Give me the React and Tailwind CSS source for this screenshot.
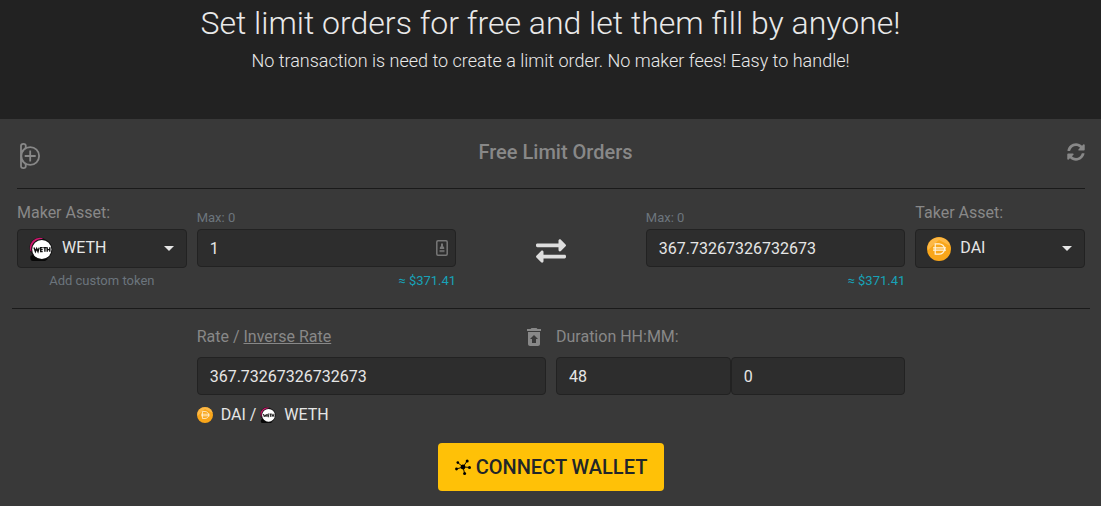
import React, { useState } from 'react';
import { FaExchangeAlt, FaSyncAlt } from 'react-icons/fa';
import { MdRestoreFromTrash } from 'react-icons/md';

const tokens = ['WETH', 'DAI'];

const inputClass =
  'block w-full h-[38px] px-3 rounded border border-[#222] bg-[#2d2d2d] text-base text-[#e6e6e6] outline-none focus:border-[#666]';

const WethIcon = ({ className }) => (
  <svg viewBox="0 0 24 24" className={className} aria-hidden="true">
    <path d="M1.5 19 L5 17 L19 22 L16 24 H4 Q0.5 24 1.5 19Z" fill="#080808" />
    <circle cx="10.5" cy="10.5" r="10" fill="#1c0c15" />
    <path d="M1.5 14 A10 10 0 0 1 14 1.2 L9 5 L4 15Z" fill="#d0186f" />
    <circle cx="12.8" cy="12.5" r="10.6" fill="#111" />
    <circle cx="12.8" cy="12.5" r="9.6" fill="#fff" />
    <path
      d="M5 10.6 L6.4 14.6 L7.7 11.6 L9 14.6 L10.2 10.6 M13.7 10.6 H11.7 V14.6 H13.7 M11.7 12.6 H13.7 M14.3 10.6 H17.5 M15.9 10.6 V14.8 M18.2 10.2 V14.8 M20.8 10.2 V14.8 M18.2 12.6 H20.8"
      fill="none"
      stroke="#111"
      strokeWidth="1.4"
    />
  </svg>
);

const DaiIcon = ({ className }) => (
  <svg viewBox="0 0 24 24" className={className} aria-hidden="true">
    <circle cx="12" cy="12" r="12" fill="#f9a61a" />
    <path d="M0.5 9 A12 12 0 0 1 23.5 9 L12 3 L1 13Z" fill="#ffc15a" opacity="0.7" />
    <path
      d="M8.2 6.8 H12 C14.8 6.8 17.6 8.8 17.6 12 C17.6 15.2 14.8 17.2 12 17.2 H8.2 Z M6 10.8 H19 M6 13.2 H19"
      fill="none"
      stroke="#fff4dc"
      strokeWidth="1.2"
    />
  </svg>
);

const TokenIcon = ({ token, className }) =>
  token === 'WETH' ? <WethIcon className={className} /> : <DaiIcon className={className} />;

const AddPanelIcon = () => (
  <svg viewBox="0 0 20 26" className="w-5 h-[26px]" fill="none" stroke="currentColor" strokeWidth="1.8" aria-hidden="true">
    <circle cx="10.2" cy="13" r="8.9" />
    <path d="M10.2 7.5 V18.5 M4.7 13 H15.7" />
    <path d="M1 23 V3 C1 0.2 5.8 0.2 5.8 3 L5.6 5.2 M1 13 V23 C1 25.8 5.8 25.8 5.8 23 L5.6 20.8" strokeWidth="1.8" />
    <path d="M1 9 L5.6 4.8 M1 17 L5.6 21.2" strokeWidth="1.2" />
  </svg>
);

const ContactIcon = ({ className }) => (
  <svg viewBox="0 0 12 16" className={className} aria-hidden="true">
    <rect x="0.8" y="0.8" width="10.4" height="14.4" rx="1.2" fill="none" stroke="#777" strokeWidth="1.5" />
    <path d="M5 3.5 H7 V6 L8.2 7.5 V9 H3.8 V7.5 L5 6Z" fill="#777" />
    <path d="M3.5 10 H8.5 V12.2 H3.5Z" fill="#666" />
  </svg>
);

const HubIcon = () => (
  <svg viewBox="0 0 16 16" className="w-4 h-4" fill="#000" aria-hidden="true">
    <path
      d="M8 8 L2.8 3.6 M8 8 L12.2 1.9 M8 8 L1.5 10 M8 8 L14.5 8.4 M8 8 L9.6 14.4"
      stroke="#000"
      strokeWidth="0.9"
    />
    <circle cx="8" cy="8" r="2.4" />
    <circle cx="2.8" cy="3.6" r="1.3" />
    <circle cx="12.2" cy="1.9" r="1.5" />
    <circle cx="1.5" cy="10" r="1.4" />
    <circle cx="14.5" cy="8.4" r="1.5" />
    <circle cx="9.6" cy="14.4" r="1.5" />
  </svg>
);

const TokenSelect = ({ id, label, value, onChange }) => (
  <div>
    <label htmlFor={id} className="block mb-1 text-base leading-6 text-[#888]">
      {label}
    </label>
    <div className="relative">
      <TokenIcon token={value} className="absolute left-3 top-2 w-6 h-6 pointer-events-none" />
      <select
        id={id}
        value={value}
        onChange={(e) => onChange(e.target.value)}
        className="block w-full h-[39px] pl-11 pr-8 pb-0.5 appearance-none rounded border border-[#222] bg-[#2d2d2d] text-base text-[#e6e6e6] outline-none cursor-pointer"
      >
        {tokens.map((token) => (
          <option key={token}>{token}</option>
        ))}
      </select>
      <svg viewBox="0 0 10 5" className="absolute right-[13px] top-[17px] w-[10px] h-[5px] pointer-events-none" aria-hidden="true">
        <path d="M0 0 H10 L5 5Z" fill="#e6e6e6" />
      </svg>
    </div>
  </div>
);

const AmountField = ({ id, value, onChange, usd, contact }) => (
  <div className="pt-1.5">
    <label htmlFor={id} className="block text-[13px] leading-[22px] text-[#6c757d]">
      Max: 0
    </label>
    <div className="relative">
      <input id={id} type="text" value={value} onChange={(e) => onChange(e.target.value)} className={inputClass} />
      {contact && <ContactIcon className="absolute right-2 top-[11px] w-3 h-4" />}
    </div>
    <p className="pt-1 text-right text-[13px] leading-5 text-[#17a2b8]">≈ ${usd}</p>
  </div>
);

export default function App() {
  const [maker, setMaker] = useState('WETH');
  const [taker, setTaker] = useState('DAI');
  const [makerAmount, setMakerAmount] = useState('1');
  const [takerAmount, setTakerAmount] = useState('367.73267326732673');
  const [rate, setRate] = useState('367.73267326732673');
  const [hours, setHours] = useState('48');
  const [minutes, setMinutes] = useState('0');

  const swap = () => {
    setMaker(taker);
    setTaker(maker);
  };

  return (
    <div className="min-h-screen flex flex-col bg-[#393939] font-['Roboto',sans-serif]">
      {/* Hero */}
      <header className="pb-11 bg-[#222] text-center font-light text-[#e9e9e9]">
        <h1 className="text-[32px] leading-[46px]">Set limit orders for free and let them fill by anyone!</h1>
        <p className="text-lg leading-[29px]">
          No transaction is need to create a limit order. No maker fees! Easy to handle!
        </p>
      </header>

      <main className="pl-3 pr-[11px]">
        {/* Card header */}
        <div className="mx-[5px] h-[70px] flex items-center justify-between border-b border-[#1a1a1a] text-[#888]">
          <button type="button" aria-label="Add panel" className="pl-[3px] pt-1 cursor-pointer">
            <AddPanelIcon />
          </button>
          <h2 className="pl-1 pb-1 text-xl font-medium">Free Limit Orders</h2>
          <button type="button" aria-label="Refresh" className="pb-1 cursor-pointer">
            <FaSyncAlt className="w-[18px] h-[18px]" />
          </button>
        </div>

        {/* Assets */}
        <div className="h-[120px] pt-3 grid grid-cols-12 border-b border-[#1a1a1a]">
          <div className="col-span-2 px-[5px]">
            <TokenSelect id="maker" label="Maker Asset:" value={maker} onChange={setMaker} />
            <div className="pt-1 text-center text-[13px] leading-[18px]">
              <a href="#custom" className="text-[#6c757d]">Add custom token</a>
            </div>
          </div>
          <div className="col-span-3 px-[5px]">
            <AmountField id="maker-amount" value={makerAmount} onChange={setMakerAmount} usd="371.41" contact />
          </div>
          <div className="col-span-2 pt-[35px] flex justify-center items-start">
            <button type="button" aria-label="Swap assets" onClick={swap} className="text-[#dedede] cursor-pointer">
              <FaExchangeAlt className="w-[30px] h-[30px]" />
            </button>
          </div>
          <div className="col-span-3 px-[5px]">
            <AmountField id="taker-amount" value={takerAmount} onChange={setTakerAmount} usd="371.41" />
          </div>
          <div className="col-span-2 px-[5px]">
            <TokenSelect id="taker" label="Taker Asset:" value={taker} onChange={setTaker} />
          </div>
        </div>

        {/* Rate and duration */}
        <div className="pt-4 grid grid-cols-12">
          <div className="col-span-4 col-start-3 px-[5px]">
            <div className="mb-2 flex items-center justify-between leading-6 text-[#888]">
              <div>
                <label htmlFor="rate">Rate</label> /{' '}
                <a href="#inverse" className="underline">Inverse Rate</a>
              </div>
              <button type="button" aria-label="Reset rate" className="cursor-pointer">
                <MdRestoreFromTrash className="w-6 h-6" />
              </button>
            </div>
            <input id="rate" type="text" value={rate} onChange={(e) => setRate(e.target.value)} className={inputClass} />
            <div className="mt-2 flex items-center leading-6 text-[#e6e6e6]">
              <TokenIcon token={taker} className="w-4 h-4 mr-2" />
              {taker} /
              <TokenIcon token={maker} className="w-4 h-4 ml-1 mr-2" />
              {maker}
            </div>
          </div>
          <div className="col-span-4 px-[5px]">
            <label htmlFor="hours" className="block mb-2 leading-6 text-[#888]">
              Duration HH:MM:
            </label>
            <div className="flex">
              <input id="hours" type="text" value={hours} onChange={(e) => setHours(e.target.value)} className={inputClass} />
              <input
                type="text"
                aria-label="Minutes"
                value={minutes}
                onChange={(e) => setMinutes(e.target.value)}
                className={inputClass}
              />
            </div>
          </div>
        </div>

        <div className="py-4 flex justify-center">
          <button
            type="button"
            className="h-12 px-[17px] flex items-center gap-[5px] rounded bg-[#ffc107] text-xl font-medium text-[#212529] cursor-pointer hover:bg-[#e0a800]"
          >
            <HubIcon />
            CONNECT WALLET
          </button>
        </div>
      </main>
    </div>
  );
}
